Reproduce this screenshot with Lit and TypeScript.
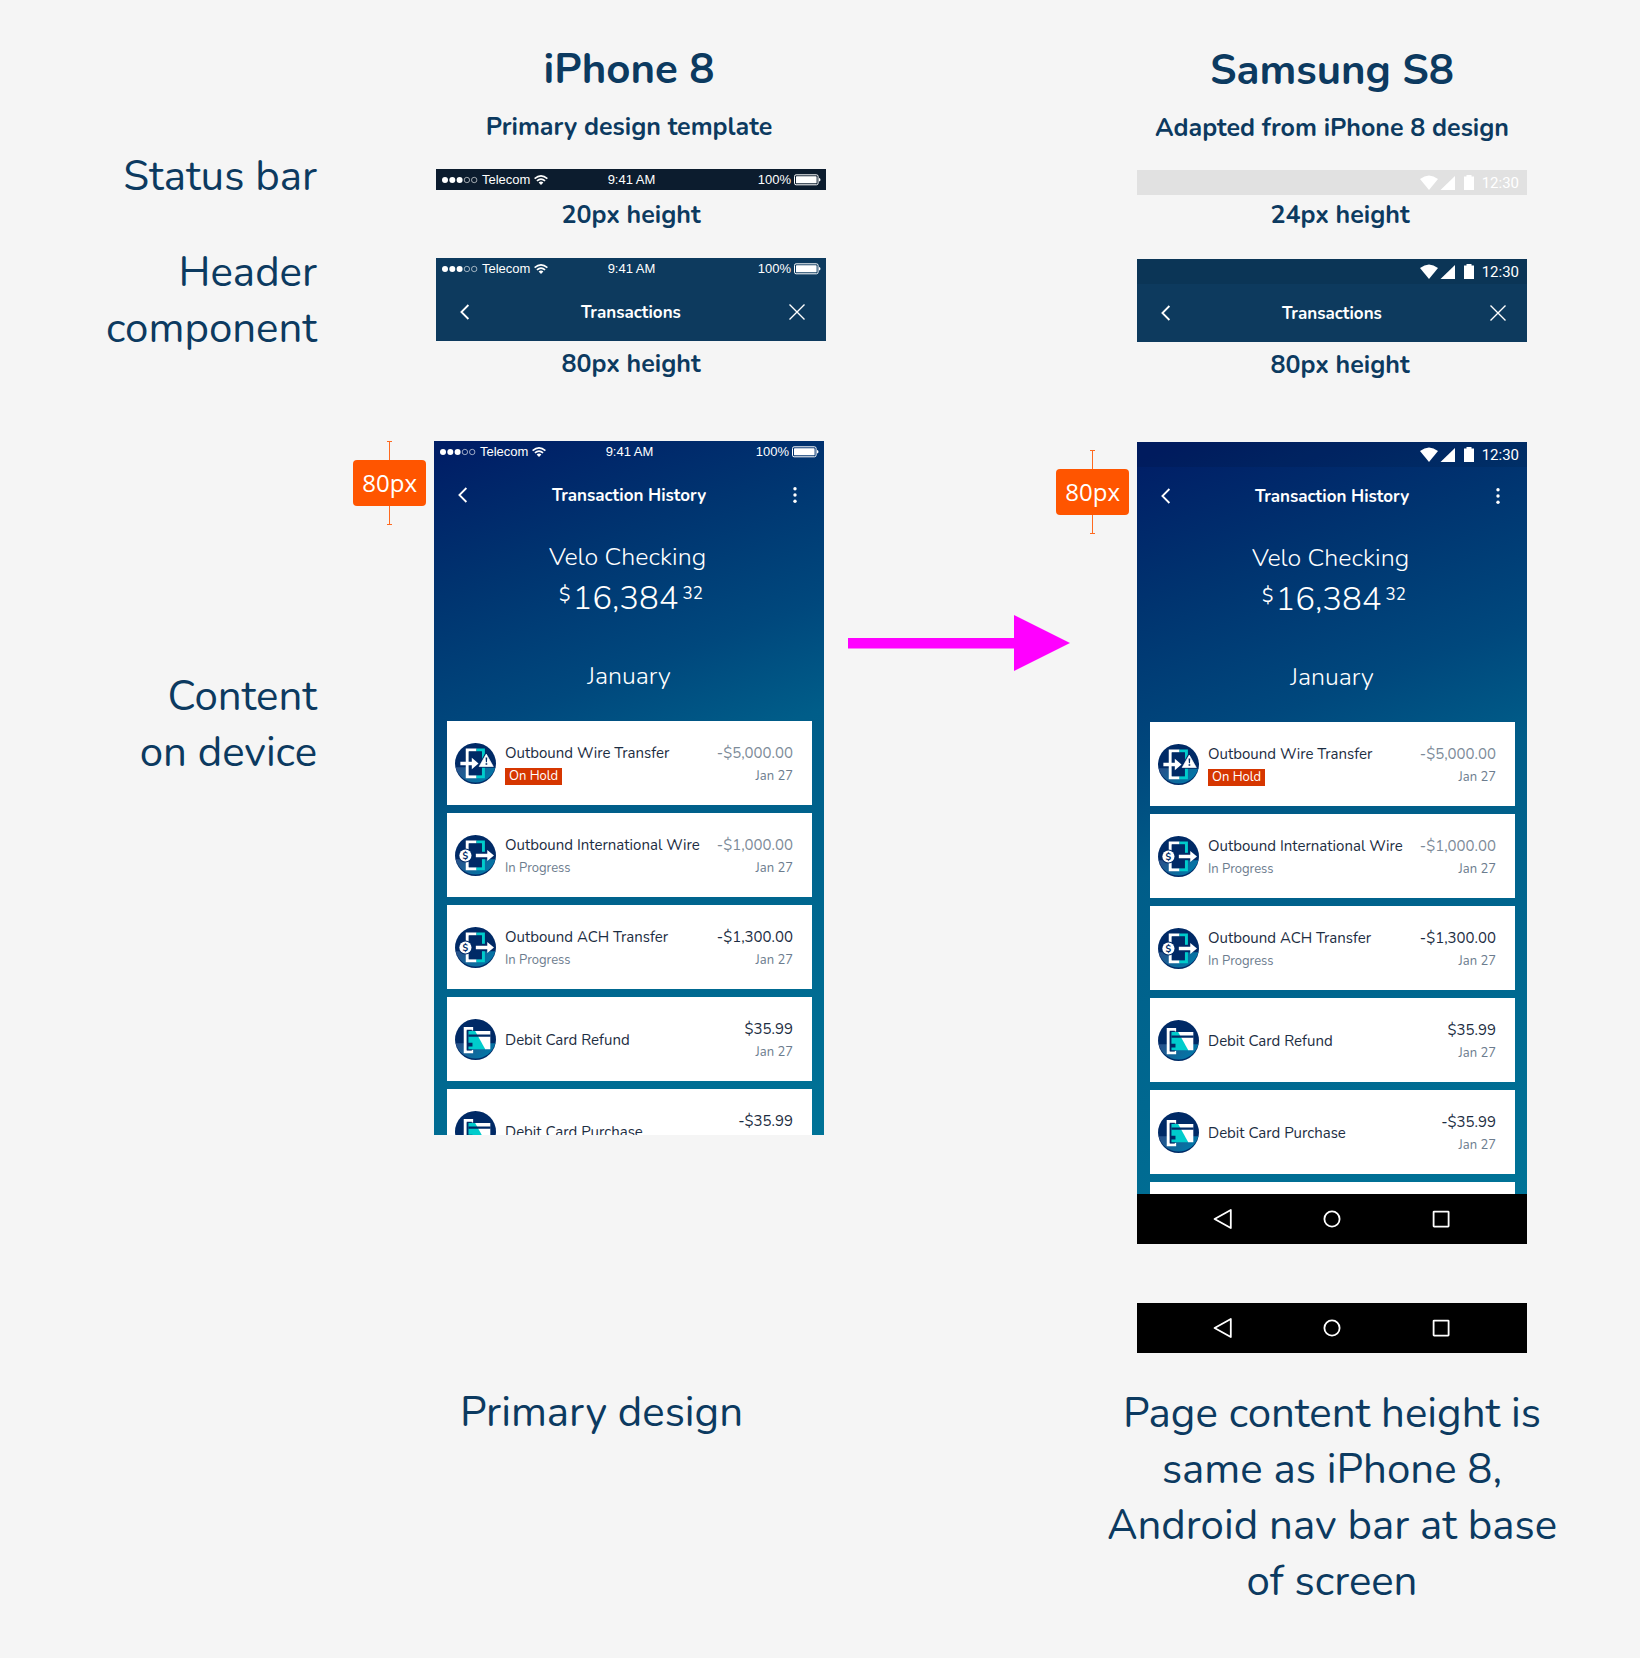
import { LitElement, html, svg, css, nothing } from "lit";
import { customElement, property } from "lit/decorators.js";

type Platform = "ios" | "android";
type IconKind = "wire" | "transfer" | "card";

interface Transaction {
  icon: IconKind;
  title: string;
  status?: string;
  hold?: boolean;
  amount: string;
  pending?: boolean;
}

const TRANSACTIONS: Transaction[] = [
  { icon: "wire", title: "Outbound Wire Transfer", status: "On Hold", hold: true, amount: "-$5,000.00", pending: true },
  { icon: "transfer", title: "Outbound International Wire", status: "In Progress", amount: "-$1,000.00", pending: true },
  { icon: "transfer", title: "Outbound ACH Transfer", status: "In Progress", amount: "-$1,300.00" },
  { icon: "card", title: "Debit Card Refund", amount: "$35.99" },
  { icon: "card", title: "Debit Card Purchase", amount: "-$35.99" },
];

@customElement("status-bar")
export class StatusBar extends LitElement {
  @property() platform: Platform = "ios";

  static styles = css`
    :host { display: block; color: #fff; }
    .bar { display: grid; grid-template-columns: 1fr auto 1fr; align-items: center; }
    .ios { height: 21px; padding: 0 5px 0 6px; font: 13px/21px "Liberation Sans", Arial, sans-serif; }
    .carrier, .power { display: flex; align-items: center; gap: 4px; }
    .power { justify-content: flex-end; gap: 3px; }
    .android {
      height: 25px; padding: 0 8px; background: rgba(0, 0, 0, 0.08);
      font: 400 15px/26px Roboto, sans-serif;
      display: flex; justify-content: flex-end;
    }
    svg { display: block; }
    .glyphs { margin-right: 8px; }
  `;

  render() {
    if (this.platform === "android") {
      return html`<div class="bar android">
        <svg class="glyphs" width="54" height="15" viewBox="0 0 54 15" fill="#fff" aria-hidden="true">
          <path d="M0 4 Q9 -3 18 4 L9 15Z" />
          <path d="M35 1V15H20.5Z" />
          <path d="M44 1.5h2.5V0h5v1.5H54V15H44Z" />
        </svg>
        <span>12:30</span>
      </div>`;
    }
    return html`<div class="bar ios">
      <div class="carrier">
        <svg width="36" height="8" viewBox="0 0 36 8" aria-hidden="true">
          ${[3, 10.3, 17.6].map((x) => svg`<circle cx=${x} cy="4" r="3" fill="#fff" />`)}
          ${[24.9, 32.2].map((x) => svg`<circle cx=${x} cy="4" r="2.7" fill="none" stroke="#fff" stroke-width=".6" />`)}
        </svg>
        <span>Telecom</span>
        <svg width="14" height="10" viewBox="0 0 14 10" fill="none" stroke="#fff" stroke-width="1.5" aria-hidden="true">
          <path d="M.6 3.6Q7 -1.9 13.4 3.6M2.9 5.9Q7 2.3 11.1 5.9" />
          <path d="M4.6 7.4Q7 5.5 9.4 7.4L7 9.9Z" fill="#fff" stroke="none" />
        </svg>
      </div>
      <span>9:41 AM</span>
      <div class="power">
        <span>100%</span>
        <svg width="27" height="12" viewBox="0 0 27 12" aria-hidden="true">
          <rect x=".5" y=".8" width="23.6" height="10" rx="1.6" fill="none" stroke="#fff" />
          <rect x="2" y="2.3" width="20.6" height="7" rx=".6" fill="#fff" />
          <path d="M25 4q1.5 .3 1.5 1.8T25 7.6Z" fill="#fff" />
        </svg>
      </div>
    </div>`;
  }
}

@customElement("title-bar")
export class TitleBar extends LitElement {
  @property() platform: Platform = "ios";
  @property() heading = "";
  @property() action: "close" | "more" = "close";

  static styles = css`
    :host { display: block; color: #fff; }
    .row {
      display: grid; grid-template-columns: 58px 1fr 58px; align-items: center;
      height: 58px; font: 700 17px/24px Nunito, Lato, sans-serif; text-align: center;
    }
    .ios { padding-top: 4px; }
    .heading { margin: 0; padding-top: 2px; font: inherit; }
    button {
      display: grid; place-items: center; height: 40px; padding: 0; border: 0;
      background: none; color: inherit; cursor: pointer;
    }
    svg { display: block; fill: none; stroke: currentColor; }
  `;

  render() {
    return html`<status-bar .platform=${this.platform}></status-bar>
      <div class="row ${this.platform}">
        <button aria-label="Back">
          <svg width="10" height="16" viewBox="0 0 10 16" stroke-width="1.8"><path d="M8.4 1 1.4 8 8.4 15" /></svg>
        </button>
        <h3 class="heading">${this.heading}</h3>
        ${this.action === "close"
          ? html`<button aria-label="Close">
              <svg width="16" height="16" viewBox="0 0 16 16" stroke-width="1.4"><path d="M.5 .5l15 15M15.5 .5l-15 15" /></svg>
            </button>`
          : html`<button aria-label="More">
              <svg width="4" height="16" viewBox="0 0 4 16">
                ${[1.8, 8, 14.2].map((y) => svg`<circle cx="2" cy=${y} r="1.7" fill="currentColor" stroke="none" />`)}
              </svg>
            </button>`}
      </div>`;
  }
}

@customElement("transaction-icon")
export class TransactionIcon extends LitElement {
  @property() kind: IconKind = "card";

  static styles = css`
    :host { display: block; }
    svg { display: block; }
    .currency { font: 700 28px "Nunito", Lato, sans-serif; fill: #002a66; text-anchor: middle; }
  `;

  private door() {
    return svg`
      <path d="M64 16H32V105H64V96H41V25H64Z" fill="#fff" />
      <path d="M64 16H89V105H64V96H80V25H64Z" fill="#00cccc" />
      <path d="M41 25H80V96H41Z" fill="#002a66" />`;
  }

  private art() {
    switch (this.kind) {
      case "wire":
        return svg`${this.door()}
          <path d="M16 56H50V44L70 61 50 78V66H16Z" fill="#fff" />
          <path d="M93 24 120 74H66Z" fill="#002a66" />
          <path d="M93 33 114 70H72Z" fill="#fff" stroke="#fff" stroke-width="2" stroke-linejoin="round" />
          <path d="M91 43h5l-1 14h-3ZM91 60h5v5h-5Z" fill="#002a66" />`;
      case "transfer":
        return svg`${this.door()}
          <circle cx="31" cy="61" r="21" fill="#002a66" />
          <circle cx="31" cy="61" r="18" fill="#fff" />
          <text class="currency" x="31" y="71">$</text>
          <path d="M58 50H96V72H58Z" fill="#002a66" />
          <path d="M62 56H96V45L116 61 96 77V66H62Z" fill="#fff" />`;
      default:
        return svg`
          <path d="M26 24H54V34H35V92H54V102H26Z" fill="#fff" />
          <path d="M35 32H50V94H35Z" fill="#002a66" />
          <path d="M40 36H62L92 90H40Z" fill="#00cccc" />
          <path d="M60 36H105V90H90Z" fill="#fff" />
          <path d="M40 46H106V53H40ZM36 71H52V82H36Z" fill="#002a66" />`;
    }
  }

  render() {
    return html`<svg width="41" height="41" viewBox="0 0 122 122" aria-hidden="true">
      <defs>
        <linearGradient id="lower" x1="0" y1="0" x2="1" y2=".4">
          <stop offset="0" stop-color="#2a4f88" />
          <stop offset="1" stop-color="#0078a8" />
        </linearGradient>
      </defs>
      <circle cx="61" cy="61" r="61" fill="#002a66" />
      <path d="M2 72H120A61 61 0 0 1 2 72Z" fill="url(#lower)" />
      ${this.art()}
    </svg>`;
  }
}

@customElement("account-screen")
export class AccountScreen extends LitElement {
  @property() platform: Platform = "ios";

  static styles = css`
    :host {
      display: block; overflow: hidden; color: #fff;
      font-family: Nunito, Lato, sans-serif;
      background: linear-gradient(160deg, #001e66 2%, #003470 19%, #00487d 36%, #005d89 49%, #007397 100%);
    }
    .summary { display: flex; flex-direction: column; align-items: center; padding-top: 16px; }
    .name, .month { margin: 0; font-weight: 300; font-size: 25px; line-height: 34px; }
    .name { padding-right: 3px; }
    .balance { display: flex; align-items: flex-start; gap: 4px; margin: 3px 0 38px 4px; }
    .whole { font-weight: 300; font-size: 33px; line-height: 44px; }
    .symbol { font-size: 19px; line-height: 36px; margin-right: -2px; }
    .cents { font-size: 17px; line-height: 34px; }
    .list { list-style: none; margin: 0; padding: 28px 12px 0 13px; display: flex; flex-direction: column; gap: 8px; }
    .item {
      display: flex; align-items: center; gap: 9px; height: 84px; box-sizing: border-box;
      padding: 0 19px 0 8px; background: #fff; color: #1c2d42;
    }
    .info, .figures { display: flex; flex-direction: column; gap: 2px; padding-top: 1px; font-size: 15px; line-height: 22px; }
    .info { flex: 1; align-items: flex-start; }
    .figures { align-items: flex-end; }
    .status, .date { color: #6c7c8e; font-size: 13px; line-height: 20px; }
    .pending { color: #7d8b99; }
    .hold { background: #d63600; color: #fff; padding: 0 4px; line-height: 17px; margin: 2px 0 1px; }
  `;

  render() {
    return html`<title-bar .platform=${this.platform} heading="Transaction History" action="more"></title-bar>
      <div class="summary">
        <h4 class="name">Velo Checking</h4>
        <div class="balance">
          <span class="symbol">$</span><span class="whole">16,384</span><span class="cents">32</span>
        </div>
        <h4 class="month">January</h4>
      </div>
      <ul class="list">
        ${TRANSACTIONS.map(
          (t) => html`<li class="item">
            <transaction-icon .kind=${t.icon}></transaction-icon>
            <div class="info">
              <span>${t.title}</span>
              ${t.status ? html`<span class="status ${t.hold ? "hold" : ""}">${t.status}</span>` : nothing}
            </div>
            <div class="figures">
              <span class=${t.pending ? "pending" : ""}>${t.amount}</span>
              <span class="date">Jan 27</span>
            </div>
          </li>`
        )}
        <li class="item"></li>
      </ul>`;
  }
}

@customElement("android-nav")
export class AndroidNav extends LitElement {
  static styles = css`
    :host { display: block; }
    .nav { display: grid; grid-template-columns: repeat(3, 1fr); height: 50px; padding: 0 32px; background: #000; }
    button { display: grid; place-items: center; padding: 0; border: 0; background: none; cursor: pointer; }
    svg { display: block; fill: none; stroke: #fff; stroke-width: 1.8; stroke-linejoin: round; }
  `;

  render() {
    return html`<nav class="nav" aria-label="System">
      <button aria-label="Back"><svg width="20" height="20" viewBox="0 0 20 20"><path d="M17.8 1v18L1.6 10Z" /></svg></button>
      <button aria-label="Home"><svg width="20" height="20" viewBox="0 0 20 20"><circle cx="10" cy="10" r="7.6" /></svg></button>
      <button aria-label="Recent"><svg width="20" height="20" viewBox="0 0 20 20"><rect x="2.6" y="2.6" width="15" height="15" rx=".5" /></svg></button>
    </nav>`;
  }
}

@customElement("size-marker")
export class SizeMarker extends LitElement {
  static styles = css`
    :host { display: flex; flex-direction: column; align-items: center; }
    .value {
      padding: 0 9px; border-radius: 4px; background: #ff5500; color: #fff;
      font: 24px/46px "Open Sans", "Noto Sans", sans-serif;
    }
    svg { display: block; stroke: #ff6a20; }
  `;

  render() {
    return html`
      <svg width="7" height="19" viewBox="0 0 7 19" aria-hidden="true"><path d="M1 .5H6M3.5 .5V19" /></svg>
      <span class="value">80px</span>
      <svg width="7" height="19" viewBox="0 0 7 19" aria-hidden="true"><path d="M1 18.5H6M3.5 0V18.5" /></svg>`;
  }
}

@customElement("app-root")
export class AppRoot extends LitElement {
  static styles = css`
    :host {
      display: block; min-height: 100vh; background: #f5f5f5; color: #0c3a60;
      font-family: Nunito, Lato, sans-serif;
    }
    .board {
      display: grid; grid-template-columns: 317fr 117fr 392fr 311fr 390fr 113fr;
      padding: 42px 0 32px; align-items: start;
    }
    h1, h2, p { margin: 0; }
    .labels { display: flex; flex-direction: column; text-align: right; padding-top: 107px; }
    .labels, .caption { font-size: 42px; line-height: 56px; }
    .header-label { margin-top: 40px; }
    .content-label { margin-top: 312px; }
    .markers { display: flex; flex-direction: column; align-items: flex-end; padding: 399px 8px 0 0; }
    .bridge { display: flex; flex-direction: column; align-items: flex-end; padding: 408px 8px 0 22px; gap: 81px; }
    .arrow { align-self: flex-start; display: block; }
    .device { display: flex; flex-direction: column; text-align: center; }
    .android { padding-top: 1px; }
    .title { font-weight: 700; font-size: 42px; line-height: 56px; }
    .subtitle, .note { font-weight: 700; font-size: 25px; line-height: 32px; }
    .subtitle { margin: 13px -16px 26px; }
    .ios .title, .ios .subtitle { padding-right: 2px; }
    .ios .status, .ios .header { margin-left: 2px; }
    .ios .status { background: #0c1c2e; }
    .ios .status-note { margin: 9px 0 27px; }
    .android .status-note { margin: 4px 0 28px; }
    .note { padding-left: 2px; }
    .android .note { padding-left: 16px; }
    .header { background: #0d3a5e; }
    .header-note { margin: 7px 0 61px; }
    .screen { text-align: left; }
    .ios .screen { aspect-ratio: 390 / 694; margin-right: 2px; }
    .android .screen { aspect-ratio: 390 / 752; }
    .nav-sample { margin-top: 59px; }
    .caption { margin: 33px -40px 0; }
    .ios .caption { margin: 250px 0 0; padding-right: 57px; }
  `;

  render() {
    return html`<main class="board">
      <div class="labels">
        <p>Status bar</p>
        <p class="header-label">Header<br />component</p>
        <p class="content-label">Content<br />on device</p>
      </div>
      <div class="markers"><size-marker></size-marker></div>
      <section class="device ios">
        <h1 class="title">iPhone 8</h1>
        <h2 class="subtitle">Primary design template</h2>
        <status-bar class="status"></status-bar>
        <p class="note status-note">20px height</p>
        <title-bar class="header" heading="Transactions"></title-bar>
        <p class="note header-note">80px height</p>
        <account-screen class="screen"></account-screen>
        <p class="caption">Primary design</p>
      </section>
      <div class="bridge">
        <size-marker></size-marker>
        <svg class="arrow" width="222" height="56" viewBox="0 0 222 56" fill="#ff00ff" aria-hidden="true">
          <path d="M0 23H166V0L222 28 166 56V33.5H0Z" />
        </svg>
      </div>
      <section class="device android">
        <h1 class="title">Samsung S8</h1>
        <h2 class="subtitle">Adapted from iPhone 8 design</h2>
        <status-bar platform="android"></status-bar>
        <p class="note status-note">24px height</p>
        <title-bar class="header" platform="android" heading="Transactions"></title-bar>
        <p class="note header-note">80px height</p>
        <account-screen class="screen" platform="android"></account-screen>
        <android-nav></android-nav>
        <android-nav class="nav-sample"></android-nav>
        <p class="caption">Page content height is<br />same as iPhone 8,<br />Android nav bar at base<br />of screen</p>
      </section>
    </main>`;
  }
}
